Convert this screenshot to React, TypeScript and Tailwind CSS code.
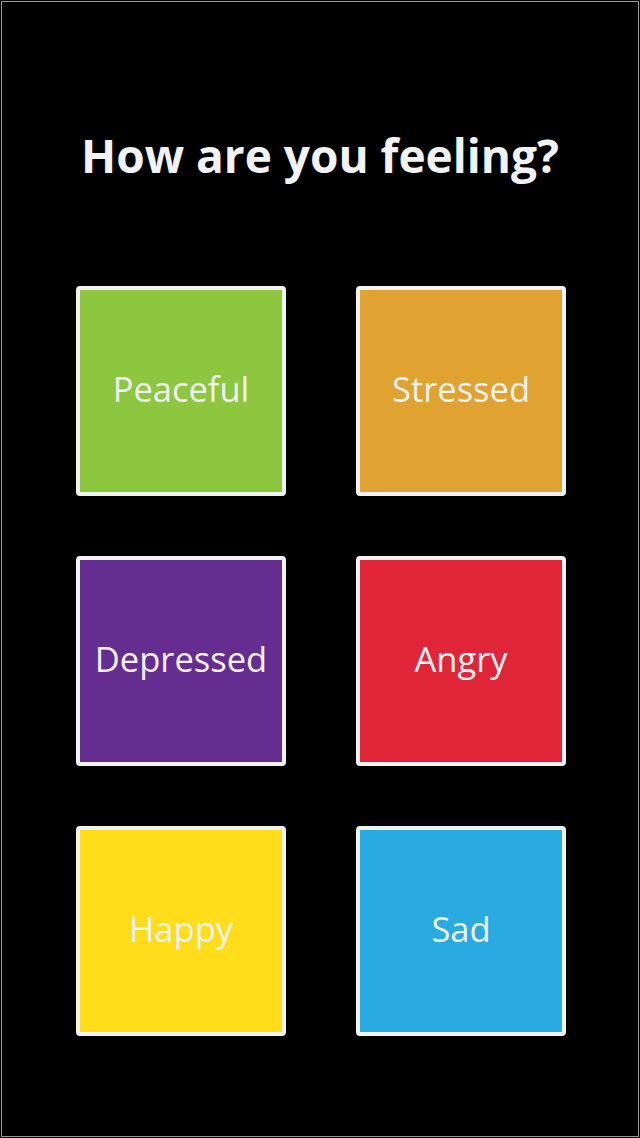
const moods = [
  { label: 'Peaceful', bg: 'bg-[#8dc63f]' },
  { label: 'Stressed', bg: 'bg-[#e0a231]' },
  { label: 'Depressed', bg: 'bg-[#662d91]' },
  { label: 'Angry', bg: 'bg-[#e02538]' },
  { label: 'Happy', bg: 'bg-[#ffdd1b]' },
  { label: 'Sad', bg: 'bg-[#29abe2]' },
];

export default function App() {
  return (
    <main className="h-[1138px] w-[640px] bg-black p-px" style={{ fontFamily: '"Open Sans", sans-serif' }}>
      <div className="flex h-full flex-col items-center border border-[#9a9a9a] bg-black">
        <h1 className="mt-[122px] text-[46px] leading-[62px] font-bold text-[#f1f2f2]">How are you feeling?</h1>

        <div className="mt-[100px] ml-[2px] grid grid-cols-[210px_210px] gap-x-[70px] gap-y-[60px]">
          {moods.map((m) => (
            <button
              key={m.label}
              className={`flex h-[210px] w-[210px] items-center justify-center rounded-[4px] border-4 border-[#f1f2f2] pb-[4px] ${m.bg} text-[34.5px] text-[#f1f2f2]`}
            >
              {m.label}
            </button>
          ))}
        </div>
      </div>
    </main>
  );
}
